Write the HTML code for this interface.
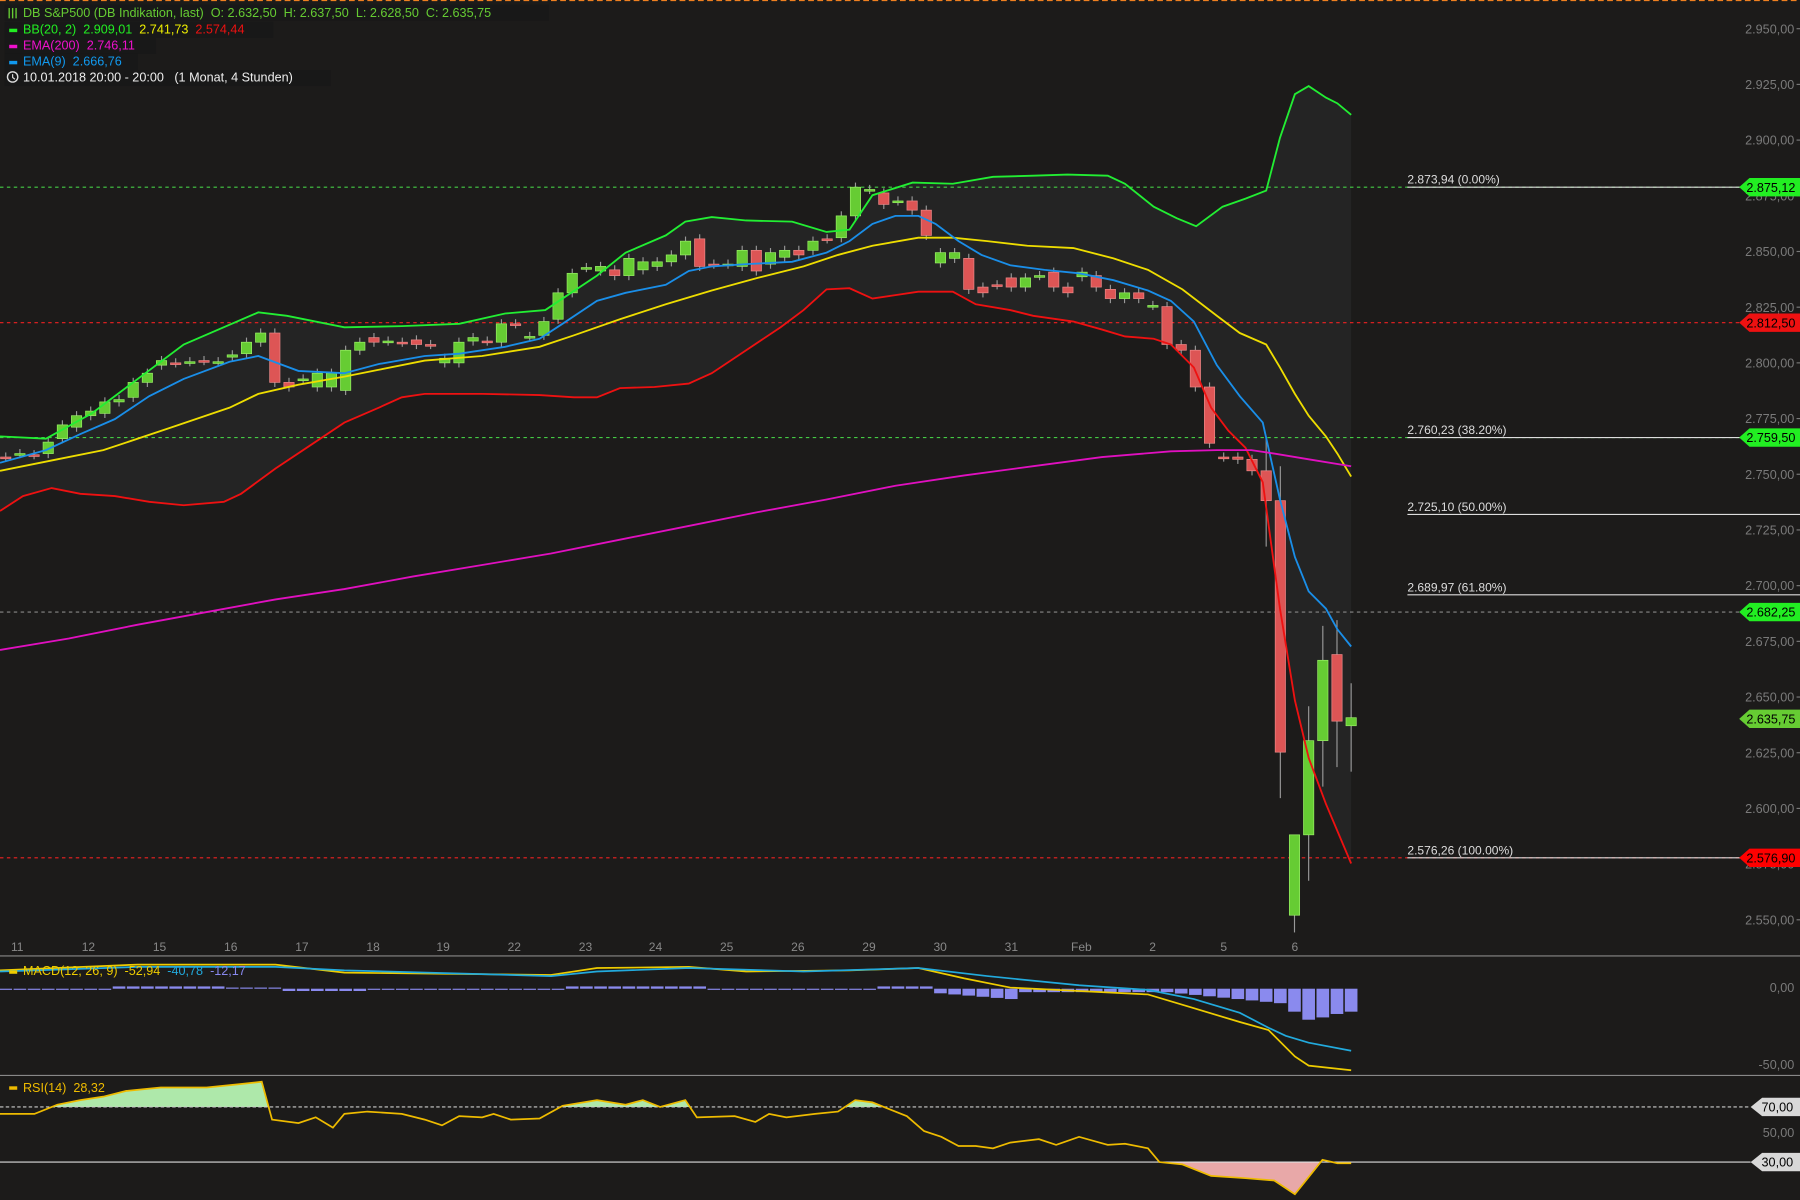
<!DOCTYPE html>
<html><head><meta charset="utf-8"><style>
html,body{margin:0;padding:0;background:#1c1b1a;overflow:hidden}
svg{display:block}
text{font-family:"Liberation Sans",sans-serif;white-space:pre}
</style></head><body>
<svg id="s" width="1800" height="1200" viewBox="0 0 1568 1045" preserveAspectRatio="none" xmlns="http://www.w3.org/2000/svg" xml:space="preserve">
<rect width="1568" height="1045" fill="#1c1b1a"/>
<line x1="0" y1="0.5" x2="1568" y2="0.5" stroke="#f08020" stroke-dasharray="5,3"/>
<g id="g"></g>
</svg>
<script>
const g=document.getElementById('g');let h='';
const P=a=>a.map(p=>p.join(',')).join(' ');
const up=[[0,380],[40,382],[80,360],[120,330],[160,300],[225,272],[250,275],[300,285],[350,284],[400,282],[440,273],[475,270],[490,260],[520,240],[545,220],[580,205],[597,193],[620,189],[650,192],[690,193],[720,202],[740,200],[760,170],[795,159],[830,160],[865,154],[900,153],[930,152],[965,153],[980,160],[1005,180],[1025,190],[1042,197],[1065,180],[1085,173],[1103,166],[1115,120],[1128,82],[1140,75],[1155,85],[1165,90],[1177,100]];
const mid=[[0,410],[50,400],[90,392],[150,372],[200,355],[225,343],[260,335],[300,328],[330,322],[370,314],[420,310],[470,302],[500,292],[540,278],[580,265],[620,253],[660,242],[700,232],[730,222],[760,214],[800,207],[830,207],[860,210],[895,214],[935,216],[970,225],[1000,235],[1030,252],[1060,275],[1080,290],[1103,300],[1115,320],[1128,343],[1140,362],[1155,380],[1165,395],[1177,415]];
const lo=[[0,445],[20,432],[45,425],[70,430],[100,432],[130,437],[160,440],[195,437],[210,430],[240,408],[270,388],[300,368],[330,355],[350,346],[370,343],[420,343],[470,344],[500,346],[520,346],[540,338],[570,337],[600,334],[620,325],[650,305],[680,285],[700,270],[720,252],[740,251],[760,260],[780,257],[800,254],[830,254],[850,265],[880,270],[900,275],[935,280],[960,287],[980,293],[1005,295],[1020,300],[1040,320],[1055,355],[1070,375],[1085,390],[1100,420],[1115,530],[1128,610],[1140,660],[1155,700],[1177,752]];
const ema9=[[0,403],[40,392],[70,378],[100,365],[130,345],[160,330],[200,315],[225,310],[260,323],[300,325],[330,317],[370,310],[400,308],[440,302],[470,295],[490,282],[520,262],[545,255],[580,248],[600,236],[620,232],[650,230],[690,228],[720,220],[740,210],[760,195],[780,188],[800,188],[815,195],[835,210],[855,222],[880,231],[910,235],[940,238],[970,244],[1000,253],[1020,262],[1040,280],[1060,318],[1080,345],[1100,368],[1115,435],[1128,485],[1140,515],[1155,530],[1165,548],[1177,563]];
const ema200=[[0,566],[60,556],[120,544],[180,533],[240,522],[300,513],[360,502],[420,492],[480,482],[540,470],[600,458],[660,446],[720,435],[780,423],[840,414],[900,406],[960,398],[1020,393],[1060,392],[1090,392],[1110,395],[1140,400],[1177,406]];
h+=`<polygon points="${P(up)} ${P(lo.slice().reverse())}" fill="#242424"/>`;
for(let p=2950;p>=2550;p-=25){const y=25+(2950-p)*1.94;const s=(p/1000|0)+'.'+String(p%1000).padStart(3,'0')+',00';
h+=`<text x="1563" y="${y+4}" font-size="11" fill="#7a7a7a" text-anchor="end">${s}</text><line x1="1565" y1="${y}" x2="1568" y2="${y}" stroke="#7a7a7a"/>`;}
const hl=[[163,'#4c4','2.875,12','#22ee22','#000'],[281,'#e22','2.812,50','#ee1111','#000'],[381,'#4c4','2.759,50','#22ee22','#000'],[533,'#888','2.682,25','#22ee22','#000'],[747,'#e22','2.576,90','#ff0000','#000']];
hl.forEach(l=>{h+=`<line x1="0" y1="${l[0]}" x2="1515" y2="${l[0]}" stroke="${l[1]}" stroke-dasharray="3,3"/>`});
[[163,'2.873,94 (0.00%)'],[381,'2.760,23 (38.20%)'],[448,'2.725,10 (50.00%)'],[518,'2.689,97 (61.80%)'],[747,'2.576,26 (100.00%)']].forEach(f=>{
h+=`<line x1="1226" y1="${f[0]}" x2="1568" y2="${f[0]}" stroke="#ddd"/><text x="1226" y="${f[0]-3}" font-size="10.5" fill="#ddd">${f[1]}</text>`});
const C=[[398,398],[395,395],[396,396],[395,385],[382,370],[372,362],[362,358],[360,350],[350,348],[346,333],[333,325],[318,314],[316,316],[315,315],[314,314],[315,315],[311,309],[308,298],[298,290],[290,333],[333,337],[330,330],[337,325],[337,325],[340,305],[305,298],[294,298],[297,297],[298,298],[296,300],[300,300],[316,312],[316,298],[297,294],[297,297],[298,282],[282,282],[293,293],[292,280],[278,255],[255,238],[233,233],[236,232],[235,240],[240,225],[235,228],[232,228],[228,222],[222,210],[208,232],[230,230],[230,230],[232,218],[218,236],[230,220],[224,218],[218,222],[218,210],[208,208],[207,188],[188,163],[165,165],[168,178],[175,175],[175,183],[183,205],[229,220],[225,220],[225,252],[250,255],[248,248],[242,250],[250,242],[240,240],[237,250],[250,255],[241,237],[240,250],[252,260],[260,255],[255,260],[266,266],[267,300],[300,305],[305,337],[337,386],[398,398],[398,400],[400,410],[410,436],[436,655],[797,727],[727,645],[645,575],[570,628],[632,625]];
const n=C.length;C.forEach((c,i)=>{const x=5+i*(1172/(n-1));let o=c[0],cl=c[1];const green=cl<o||(cl==o&&i%2);const t=Math.min(o,cl),b=Math.max(o,cl);
const wt=t-(i>88?( i==91?0:30):4),wb=b+(i>88?(i==91?15:40):4);
h+=`<line x1="${x}" y1="${wt}" x2="${x}" y2="${wb}" stroke="#999"/><rect x="${x-4.5}" y="${t}" width="9" height="${Math.max(b-t,1.5)}" fill="${green?'#6c3':'#d55'}" stroke="${green?'#9e6':'#e88'}" stroke-width="0.6"/>`});
h+=`<polyline points="${P(up)}" fill="none" stroke="#22ee33" stroke-width="1.6"/><polyline points="${P(mid)}" fill="none" stroke="#eedd00" stroke-width="1.6"/><polyline points="${P(lo)}" fill="none" stroke="#ee1111" stroke-width="1.6"/><polyline points="${P(ema9)}" fill="none" stroke="#1a8ee8" stroke-width="1.6"/><polyline points="${P(ema200)}" fill="none" stroke="#e010c0" stroke-width="1.6"/>`;
function tag(y,txt,bg,fg){h+=`<polygon points="1515,${y} 1524,${y-8} 1568,${y-8} 1568,${y+8} 1524,${y+8}" fill="${bg}"/><text x="1564" y="${y+4}" font-size="11" fill="${fg}" text-anchor="end">${txt}</text>`}
hl.forEach(l=>tag(l[0],l[2],l[3],l[4]));tag(626,'2.635,75','#66cc33','#000');
[['11',15],['12',77],['15',139],['16',201],['17',263],['18',325],['19',386],['22',448],['23',510],['24',571],['25',633],['26',695],['29',757],['30',819],['31',881],['Feb',942],['2',1004],['5',1066],['6',1128]].forEach(d=>{h+=`<text x="${d[1]}" y="828" font-size="10.5" fill="#888" text-anchor="middle">${d[0]}</text>`});
h+=`<line x1="0" y1="832.5" x2="1568" y2="832.5" stroke="#888"/><line x1="0" y1="936.5" x2="1568" y2="936.5" stroke="#888"/>`;
for(let i=0;i<n;i++){const x=5+i*(1172/(n-1));let v;
if(i<8)v=1;else if(i<16)v=-2;else if(i<20)v=-1;else if(i<26)v=2;else if(i<40)v=1;else if(i<50)v=-2;else if(i<62)v=1;else if(i<66)v=-2;else if(i<72)v=4+(i-66);else if(i<82)v=3;else if(i<91)v=3+(i-82)*1.2;else v=[20,27,25,22,20,16][i-91]||16;
const y=861;h+=`<rect x="${x-5.5}" y="${v>=0?y:y-(-v)}" width="11" height="${Math.abs(v)}" fill="#8a8aee"/>`;}
h+=`<polyline points="0,845 120,840 240,840 300,847 480,849 520,843 600,842 650,846 740,845 800,843 840,852 880,860 940,863 1000,866 1040,878 1080,890 1105,897 1128,920 1140,928 1177,932" fill="none" stroke="#eecc00" stroke-width="1.5"/>`;
h+=`<polyline points="0,846 120,842 240,842 300,845 480,850 520,846 600,843 700,846 800,843 860,850 940,858 1000,862 1040,870 1080,882 1105,895 1120,902 1140,908 1177,915" fill="none" stroke="#22aadd" stroke-width="1.5"/>`;
h+=`<text x="1563" y="864" font-size="11" fill="#7a7a7a" text-anchor="end">0,00</text><text x="1563" y="931" font-size="11" fill="#7a7a7a" text-anchor="end">-50,00</text>`;
const R=[[0,970],[30,970],[50,962],[70,958],[90,955],[110,950],[140,947],[180,947],[210,944],[228,942],[237,975],[260,978],[275,973],[290,982],[300,970],[320,968],[350,970],[370,975],[385,980],[400,972],[420,973],[430,970],[445,975],[470,974],[490,963],[520,958],[545,962],[560,958],[575,964],[597,958],[607,973],[640,972],[658,977],[670,970],[685,973],[710,970],[730,968],[745,958],[760,960],[775,966],[790,972],[805,985],[820,990],[835,998],[850,998],[865,1000],[880,995],[905,992],[920,997],[940,990],[965,997],[980,996],[1000,1000],[1010,1012],[1030,1014],[1055,1024],[1085,1026],[1110,1028],[1128,1040],[1140,1025],[1152,1010],[1165,1013],[1177,1013]];
h+=`<defs><clipPath id="a"><rect x="0" y="930" width="1568" height="34"/></clipPath><clipPath id="b"><rect x="0" y="1012" width="1568" height="40"/></clipPath></defs>`;
h+=`<polygon clip-path="url(#a)" points="0,964 ${P(R)} 1177,964" fill="#aee8aa"/><polygon clip-path="url(#b)" points="0,1012 ${P(R)} 1177,1012" fill="#e8a8a8"/>`;
h+=`<line x1="0" y1="964" x2="1525" y2="964" stroke="#ccc" stroke-dasharray="3,2"/><line x1="0" y1="1012" x2="1525" y2="1012" stroke="#ddd"/>`;
h+=`<polyline points="${P(R)}" fill="none" stroke="#eebb00" stroke-width="1.5"/>`;
function gt(y,t){h+=`<polygon points="1525,${y} 1535,${y-8} 1568,${y-8} 1568,${y+8} 1535,${y+8}" fill="#d8d8d8"/><text x="1562" y="${y+4}" font-size="11" fill="#000" text-anchor="end">${t}</text>`}
gt(964,'70,00');gt(1012,'30,00');h+=`<text x="1563" y="990" font-size="11" fill="#7a7a7a" text-anchor="end">50,00</text>`;
h+=`<rect x="4" y="4" width="474" height="14" fill="#181818"/><text x="20" y="15" font-size="11" fill="#6c3">DB S&amp;P500 (DB Indikation, last)  O: 2.632,50  H: 2.637,50  L: 2.628,50  C: 2.635,75</text>
<g stroke="#6c3" stroke-width="1.2"><line x1="8" y1="7" x2="8" y2="16"/><line x1="11" y1="7" x2="11" y2="16"/><line x1="14" y1="7" x2="14" y2="16"/></g>
<rect x="4" y="19" width="234" height="14" fill="#181818"/><rect x="8" y="25" width="7" height="3" fill="#2e2"/><text x="20" y="29" font-size="11"><tspan fill="#2e2">BB(20, 2)  2.909,01</tspan><tspan fill="#ee0">  2.741,73</tspan><tspan fill="#e11">  2.574,44</tspan></text>
<rect x="4" y="33" width="132" height="14" fill="#181818"/><rect x="8" y="39" width="7" height="3" fill="#e1c"/><text x="20" y="43" font-size="11" fill="#e1c">EMA(200)  2.746,11</text>
<rect x="4" y="47" width="116" height="14" fill="#181818"/><rect x="8" y="53" width="7" height="3" fill="#19e"/><text x="20" y="57" font-size="11" fill="#19e">EMA(9)  2.666,76</text>
<rect x="4" y="61" width="284" height="14" fill="#181818"/><circle cx="11" cy="67" r="4.5" fill="none" stroke="#ddd" stroke-width="1.2"/><path d="M11 64.5V67.5L13 69" fill="none" stroke="#ddd"/><text x="20" y="71" font-size="11" fill="#eee">10.01.2018 20:00 - 20:00   (1 Monat, 4 Stunden)</text>
<rect x="8" y="845" width="7" height="3" fill="#ec0"/><text x="20" y="849" font-size="11"><tspan fill="#ec0">MACD(12, 26, 9)  -52,94</tspan><tspan fill="#2ad">  -40,78</tspan><tspan fill="#88e">  -12,17</tspan></text>
<rect x="8" y="946" width="7" height="3" fill="#eb0"/><text x="20" y="951" font-size="11" fill="#eb0">RSI(14)  28,32</text>`;
g.innerHTML=h;
</script>
</body></html>
